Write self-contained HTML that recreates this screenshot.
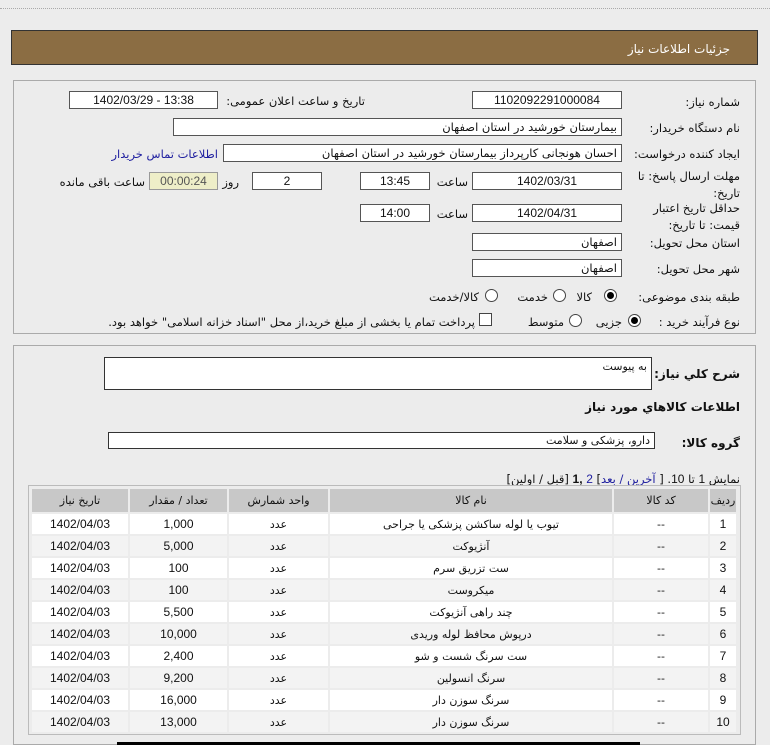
<!DOCTYPE html>
<html><head><meta charset="utf-8"><style>
*{box-sizing:border-box;margin:0;padding:0}
body{width:770px;height:745px;overflow:hidden;background:#ececec;font-family:"DejaVu Sans","Liberation Sans",sans-serif;font-size:11px;color:#111;position:relative}
.a{position:absolute}
.lbl{position:absolute;direction:rtl;text-align:right;white-space:nowrap;font-size:11.5px}
.in{position:absolute;background:#fff;border:1px solid #555;height:18px;font-size:12px;text-align:center;line-height:16px;font-family:"Liberation Sans","DejaVu Sans",sans-serif}
.inr{text-align:right;padding-right:4px;direction:rtl;font-family:"DejaVu Sans",sans-serif;font-size:11.5px}
.rad{position:absolute;width:13px;height:13px;border:1px solid #444;border-radius:50%;background:#fff}
.rad.on::after{content:"";position:absolute;left:2px;top:2px;width:7px;height:7px;border-radius:50%;background:#000}
table{border-collapse:collapse;position:absolute;left:30px;top:487px;width:708px;direction:rtl;font-size:11px}
td,th{border:2px solid #ececec;text-align:center;height:22px;padding:0}
th{background:#c8c8c8;font-weight:normal;height:25px}
tr:nth-child(odd) td{background:#f3f3f3}
tr:nth-child(even) td{background:#fff}
.n{font-family:"Liberation Sans",sans-serif;font-size:12px}
</style></head><body>
<div class="a" style="left:0;top:8px;width:770px;border-top:1px dotted #aaa"></div>
<div class="a" style="left:11px;top:30px;width:747px;height:35px;background:#8b6d43;border:1px solid #333"></div>
<div class="lbl" style="right:40px;top:42px;color:#fff;font-size:12px">جزئیات اطلاعات نیاز</div>

<div class="a" style="left:13px;top:80px;width:743px;height:254px;border:1px solid #aaa;background:#ececec"></div>

<div class="lbl" style="right:30px;top:95px">شماره نیاز:</div>
<div class="in" style="left:472px;top:91px;width:150px">1102092291000084</div>
<div class="lbl" style="right:405px;top:94px">تاریخ و ساعت اعلان عمومی:</div>
<div class="in" style="left:69px;top:91px;width:149px">1402/03/29 - 13:38</div>

<div class="lbl" style="right:30px;top:121px">نام دستگاه خریدار:</div>
<div class="in inr" style="left:173px;top:118px;width:449px">بیمارستان خورشید در استان اصفهان</div>

<div class="lbl" style="right:30px;top:147px">ایجاد کننده درخواست:</div>
<div class="in inr" style="left:223px;top:144px;width:399px">احسان هونجانی کارپرداز بیمارستان خورشید در استان اصفهان</div>
<div class="lbl" style="right:552px;top:147px;color:#2020a0">اطلاعات تماس خریدار</div>

<div class="lbl" style="right:30px;top:168px;line-height:17px">مهلت ارسال پاسخ: تا<br>تاریخ:</div>
<div class="in" style="left:472px;top:172px;width:150px">1402/03/31</div>
<div class="lbl" style="right:302px;top:175px">ساعت</div>
<div class="in" style="left:360px;top:172px;width:70px">13:45</div>
<div class="in" style="left:252px;top:172px;width:70px">2</div>
<div class="lbl" style="right:531px;top:175px">روز و</div>
<div class="in" style="left:149px;top:172px;width:69px;background:#eeeec8;border-color:#999;color:#555">00:00:24</div>
<div class="lbl" style="right:625px;top:175px">ساعت باقی مانده</div>

<div class="lbl" style="right:30px;top:200px;line-height:17px">حداقل تاریخ اعتبار<br>قیمت: تا تاریخ:</div>
<div class="in" style="left:472px;top:204px;width:150px">1402/04/31</div>
<div class="lbl" style="right:302px;top:207px">ساعت</div>
<div class="in" style="left:360px;top:204px;width:70px">14:00</div>

<div class="lbl" style="right:30px;top:236px">استان محل تحویل:</div>
<div class="in inr" style="left:472px;top:233px;width:150px">اصفهان</div>
<div class="lbl" style="right:30px;top:262px">شهر محل تحویل:</div>
<div class="in inr" style="left:472px;top:259px;width:150px">اصفهان</div>

<div class="lbl" style="right:30px;top:290px">طبقه بندی موضوعی:</div>
<div class="rad on" style="left:604px;top:289px"></div><div class="lbl" style="right:178px;top:290px">کالا</div>
<div class="rad" style="left:553px;top:289px"></div><div class="lbl" style="right:222px;top:290px">خدمت</div>
<div class="rad" style="left:485px;top:289px"></div><div class="lbl" style="right:291px;top:290px">کالا/خدمت</div>

<div class="lbl" style="right:30px;top:315px">نوع فرآیند خرید :</div>
<div class="rad on" style="left:628px;top:314px"></div><div class="lbl" style="right:148px;top:315px">جزیی</div>
<div class="rad" style="left:569px;top:314px"></div><div class="lbl" style="right:206px;top:315px">متوسط</div>
<div class="a" style="left:479px;top:313px;width:13px;height:13px;border:1px solid #444;background:#fff"></div>
<div class="lbl" style="right:295px;top:315px">پرداخت تمام یا بخشی از مبلغ خرید،از محل "اسناد خزانه اسلامی" خواهد بود.</div>

<div class="a" style="left:13px;top:345px;width:743px;height:400px;border:1px solid #aaa;background:#ececec"></div>
<div class="lbl" style="right:30px;top:367px;font-weight:bold;font-size:12px">شرح کلي نیاز:</div>
<div class="a" style="left:104px;top:357px;width:548px;height:33px;background:#fff;border:1px solid #333;direction:rtl;text-align:right;padding:2px 4px;font-size:11px">به پیوست</div>
<div class="lbl" style="right:30px;top:400px;font-weight:bold;font-size:12px">اطلاعات کالاهاي مورد نیاز</div>
<div class="lbl" style="right:30px;top:436px;font-weight:bold;font-size:12px">گروه کالا:</div>
<div class="a" style="left:108px;top:432px;width:547px;height:17px;background:#fff;border:1px solid #333;direction:rtl;text-align:right;padding:0 4px;font-size:11px;line-height:15px">دارو، پزشکی و سلامت</div>
<div class="lbl" style="right:30px;top:472px">نمایش <span class="n">1</span> تا <span class="n">10</span>. [ <span style="color:#2020a0">آخرین / بعد</span>] <span class="n" style="color:#2020a0">2</span> <b class="n">,1</b> [قبل / اولین]</div>

<div class="a" style="left:28px;top:485px;width:713px;height:250px;border:1px solid #bbb"></div>
<table>
<tr><th style="width:28px">ردیف</th><th style="width:96px">کد کالا</th><th style="width:284px">نام کالا</th><th style="width:101px">واحد شمارش</th><th style="width:99px">تعداد / مقدار</th><th>تاریخ نیاز</th></tr>
<tr><td class="n">1</td><td>--</td><td>تیوب یا لوله ساکشن پزشکی یا جراحی</td><td>عدد</td><td class="n">1,000</td><td class="n">1402/04/03</td></tr>
<tr><td class="n">2</td><td>--</td><td>آنژیوکت</td><td>عدد</td><td class="n">5,000</td><td class="n">1402/04/03</td></tr>
<tr><td class="n">3</td><td>--</td><td>ست تزریق سرم</td><td>عدد</td><td class="n">100</td><td class="n">1402/04/03</td></tr>
<tr><td class="n">4</td><td>--</td><td>میکروست</td><td>عدد</td><td class="n">100</td><td class="n">1402/04/03</td></tr>
<tr><td class="n">5</td><td>--</td><td>چند راهی آنژیوکت</td><td>عدد</td><td class="n">5,500</td><td class="n">1402/04/03</td></tr>
<tr><td class="n">6</td><td>--</td><td>درپوش محافظ لوله وریدی</td><td>عدد</td><td class="n">10,000</td><td class="n">1402/04/03</td></tr>
<tr><td class="n">7</td><td>--</td><td>ست سرنگ شست و شو</td><td>عدد</td><td class="n">2,400</td><td class="n">1402/04/03</td></tr>
<tr><td class="n">8</td><td>--</td><td>سرنگ انسولین</td><td>عدد</td><td class="n">9,200</td><td class="n">1402/04/03</td></tr>
<tr><td class="n">9</td><td>--</td><td>سرنگ سوزن دار</td><td>عدد</td><td class="n">16,000</td><td class="n">1402/04/03</td></tr>
<tr><td class="n">10</td><td>--</td><td>سرنگ سوزن دار</td><td>عدد</td><td class="n">13,000</td><td class="n">1402/04/03</td></tr>
</table>
<div class="a" style="left:117px;top:742px;width:523px;height:3px;background:#000"></div>
</body></html>
